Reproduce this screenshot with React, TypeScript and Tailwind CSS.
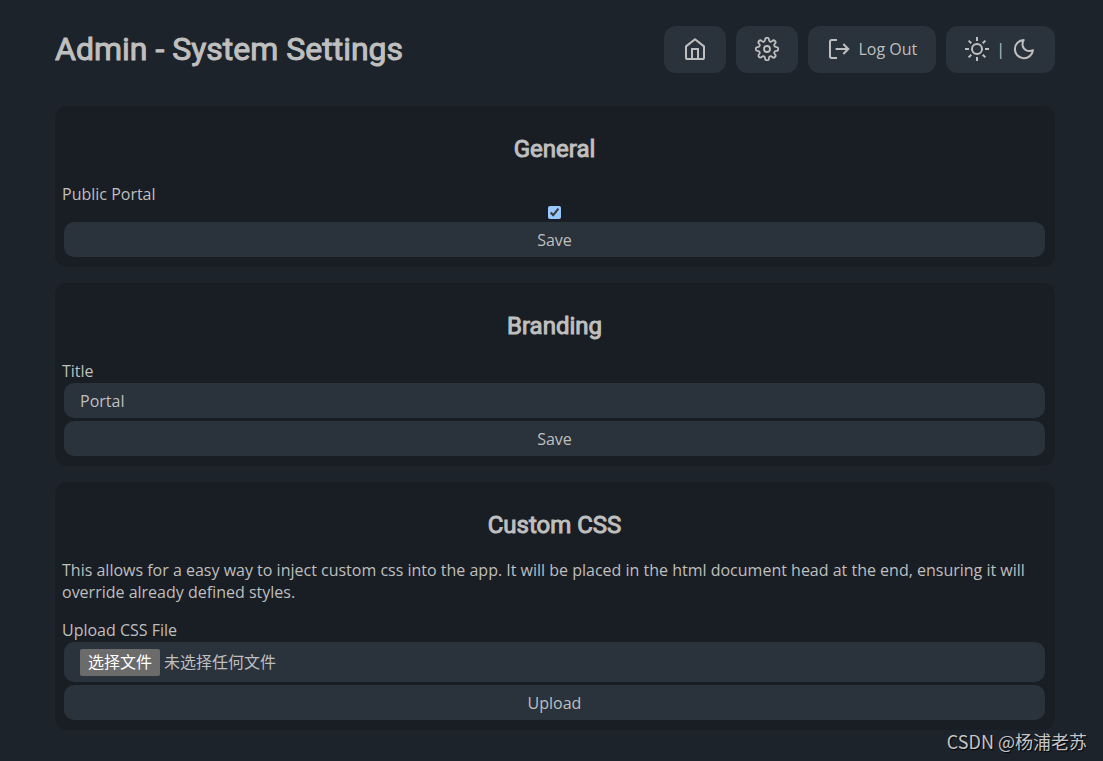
import { useState } from "react";
import type { ReactNode } from "react";

const navButton =
  "flex h-[47px] cursor-pointer items-center justify-center gap-[7px] rounded-[12px] bg-[#2a323c] px-[19px] pb-0.5 text-[#bfbfbf] hover:bg-[#343d48]";
const submitButton =
  "mx-0.5 h-[35px] cursor-pointer rounded-[10px] bg-[#2a323c] text-center hover:bg-[#343d48]";

function Icon({ children }: { children: ReactNode }) {
  return (
    <svg
      width="24"
      height="24"
      viewBox="0 0 24 24"
      fill="none"
      stroke="currentColor"
      strokeWidth="2"
      strokeLinejoin="round"
      aria-hidden="true"
      className="shrink-0"
    >
      {children}
    </svg>
  );
}

function HomeIcon() {
  return (
    <Icon>
      <path d="M3 9.4 12 2.3l9 7.1v11.1a1.6 1.6 0 0 1-1.6 1.6H4.6A1.6 1.6 0 0 1 3 20.5Z" />
      <path d="M9 22V12h6v10" strokeLinejoin="miter" />
    </Icon>
  );
}

function GearIcon() {
  return (
    <Icon>
      <circle cx="12" cy="12" r="3" strokeWidth="1.8" />
      <path
        strokeWidth="1.8"
        d="M10.1 2.6a1.9 1.9 0 0 1 3.8 0c0 2.1 2 2.9 3.4 1.4a1.9 1.9 0 0 1 2.7 2.7c-1.500 1.400-.7 3.400 1.400 3.400a1.900 1.900 0 0 1 0 3.800c-2.100 0-2.900 2-1.400 3.400a1.900 1.900 0 0 1-2.700 2.700c-1.400-1.500-3.400-.7-3.400 1.400a1.900 1.900 0 0 1-3.800 0c0-2.100-2-2.900-3.400-1.400a1.900 1.900 0 0 1-2.700-2.700c1.500-1.400.7-3.400-1.400-3.400a1.900 1.900 0 0 1 0-3.800c2.100 0 2.900-2 1.400-3.400a1.900 1.900 0 0 1 2.700-2.700c1.400 1.500 3.400.7 3.400-1.400Z"
      />
    </Icon>
  );
}

function LogOutIcon() {
  return (
    <Icon>
      <path d="M10 3H4.7A1.7 1.7 0 0 0 3 4.7v14.6A1.7 1.7 0 0 0 4.7 21H10" />
      <path d="M8.6 12H21M16.3 7l5 5-5 5" strokeLinejoin="miter" />
    </Icon>
  );
}

function SunIcon() {
  return (
    <Icon>
      <circle cx="12" cy="12" r="5" />
      <path d="M12 0v4M12 20v4M0 12h4M20 12h4M3.6 3.6l2.7 2.7M17.7 17.7l2.7 2.7M3.6 20.4l2.7-2.7M17.7 6.3l2.7-2.7" />
    </Icon>
  );
}

function MoonIcon() {
  return (
    <Icon>
      <path d="M11.7 3a9.1 9.1 0 1 0 9.3 10.2c-4.6 2.2-9.6-.3-10.4-4.7-.3-2 .1-3.9 1.1-5.5Z" />
    </Icon>
  );
}

function Card({ title, children }: { title: string; children: ReactNode }) {
  return (
    <section className="flex flex-col rounded-[12px] bg-[#191e24] pt-7 pr-2 pb-2.5 pl-[7px]">
      <h2 className="mb-[19px] text-center font-['Roboto',sans-serif] text-[24px] leading-[30px] [-webkit-text-stroke:1px_currentColor]">
        {title}
      </h2>
      {children}
    </section>
  );
}

export default function App() {
  const [isPublic, setIsPublic] = useState(true);
  const [title, setTitle] = useState("Portal");
  const [fileName, setFileName] = useState("未选择任何文件");

  return (
    <div className="relative min-h-screen bg-[#1d232a] pt-[26px] pr-12 pb-8 pl-[55px] font-['Open_Sans','Noto_Sans_CJK_SC',sans-serif] text-[16px] leading-[22px] text-[#bfbfbf] [color-scheme:dark]">
      <header className="mb-[33px] flex items-center justify-between">
        <h1 className="pb-0.5 font-['Roboto',sans-serif] text-[32px] leading-[40px] [-webkit-text-stroke:1px_currentColor]">
          Admin - System Settings
        </h1>
        <nav className="flex gap-2.5">
          <button type="button" aria-label="Home" className={navButton}>
            <HomeIcon />
          </button>
          <button type="button" aria-label="Settings" className={navButton}>
            <GearIcon />
          </button>
          <button type="button" className={navButton}>
            <LogOutIcon />
            Log Out
          </button>
          <button type="button" aria-label="Theme" className={navButton}>
            <SunIcon />
            <span>|</span>
            <MoonIcon />
          </button>
        </nav>
      </header>

      <main className="flex flex-col gap-4">
        <Card title="General">
          <form className="flex flex-col gap-[3px]" onSubmit={(e) => e.preventDefault()}>
            <div className="flex flex-col gap-px">
              <label htmlFor="public">Public Portal</label>
              <input
                id="public"
                type="checkbox"
                checked={isPublic}
                onChange={(e) => setIsPublic(e.target.checked)}
                className="size-[13px] self-center"
              />
            </div>
            <button type="submit" className={submitButton}>
              Save
            </button>
          </form>
        </Card>

        <Card title="Branding">
          <form className="flex flex-col gap-[3px]" onSubmit={(e) => e.preventDefault()}>
            <div className="flex flex-col gap-px">
              <label htmlFor="title">Title</label>
              <input
                id="title"
                type="text"
                value={title}
                onChange={(e) => setTitle(e.target.value)}
                className="mx-0.5 h-[35px] rounded-[10px] bg-[#2a323c] px-4"
              />
            </div>
            <button type="submit" className={submitButton}>
              Save
            </button>
          </form>
        </Card>

        <Card title="Custom CSS">
          <p className="mb-4">
            This allows for a easy way to inject custom css into the app. It will be placed in the
            html document head at the end, ensuring it will override already defined styles.
          </p>
          <form className="flex flex-col gap-[3px]" onSubmit={(e) => e.preventDefault()}>
            <div className="flex flex-col gap-px">
              <label htmlFor="css">Upload CSS File</label>
              <label
                htmlFor="css"
                className="mx-0.5 flex h-10 cursor-pointer items-center gap-1 rounded-[10px] bg-[#2a323c] px-4"
              >
                <input
                  id="css"
                  type="file"
                  accept=".css"
                  className="sr-only"
                  onChange={(e) => setFileName(e.target.files?.[0]?.name ?? "未选择任何文件")}
                />
                <span className="flex h-[27px] items-center rounded-[2px] bg-[#6b6b6b] px-2 text-white">
                  选择文件
                </span>
                <span>{fileName}</span>
              </label>
            </div>
            <button type="submit" className={submitButton}>
              Upload
            </button>
          </form>
        </Card>
      </main>

      <span className="absolute right-4 bottom-2 font-['Noto_Sans_CJK_SC',sans-serif] text-[18px] leading-[26px] text-[#c4c5c6] [text-shadow:1px_1px_1px_#000]">
        CSDN @杨浦老苏
      </span>
    </div>
  );
}
